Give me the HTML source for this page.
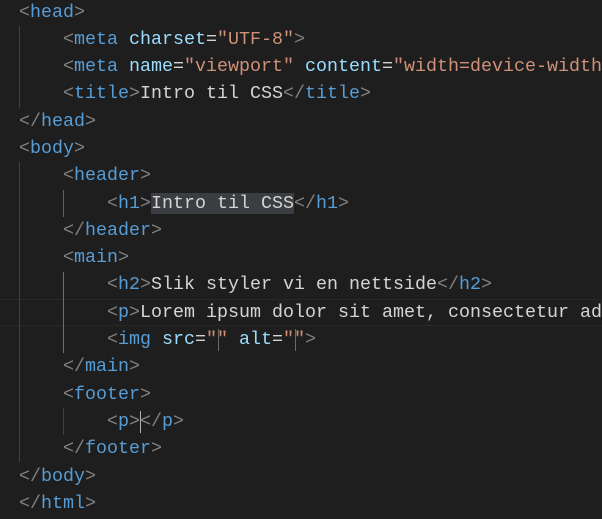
<!DOCTYPE html>
<html><head><meta charset="utf-8"><style>
body{margin:0;background:#1e1e1e;width:602px;height:518px;overflow:hidden;position:relative}
.c{position:absolute;left:19px;top:-1.5px;width:583px;height:520px;overflow:hidden;font-family:"Liberation Mono",monospace;font-size:18.33px;line-height:27.3px;color:#d4d4d4;white-space:pre}
.b{color:#808080}.t{color:#569cd6}.a{color:#9cdcfe}.s{color:#ce9178}
.g{position:absolute;width:1px;background:#404040}
.hl{position:absolute;left:0;width:602px;top:298.8px;height:25px;border-top:1px solid #282828;border-bottom:1px solid #282828}
.sel{background:#3a3d41}
.bm{position:absolute;width:1px;height:22px;background:#6a6a6a}
</style></head><body>
<div class="hl"></div>
<div class="g" style="left:19px;top:25.8px;height:81.9px"></div>
<div class="g" style="left:19px;top:162.3px;height:300px"></div>
<div class="g" style="left:63px;top:189.6px;height:27.3px;background:#606060"></div>
<div class="g" style="left:63px;top:271.5px;height:81.9px;background:#707070"></div>
<div class="g" style="left:63px;top:408px;height:27.3px"></div>
<div class="bm" style="left:218px;top:329px"></div>
<div class="bm" style="left:295px;top:329px"></div>
<div class="bm" style="left:140px;top:411px;background:#aeafad"></div>
<div class="c"><span class="b">&lt;</span><span class="t">head</span><span class="b">&gt;</span>
    <span class="b">&lt;</span><span class="t">meta</span> <span class="a">charset</span>=<span class="s">"UTF-8"</span><span class="b">&gt;</span>
    <span class="b">&lt;</span><span class="t">meta</span> <span class="a">name</span>=<span class="s">"viewport"</span> <span class="a">content</span>=<span class="s">"width=device-width, initial-scale=1.0"</span><span class="b">&gt;</span>
    <span class="b">&lt;</span><span class="t">title</span><span class="b">&gt;</span>Intro til CSS<span class="b">&lt;/</span><span class="t">title</span><span class="b">&gt;</span>
<span class="b">&lt;/</span><span class="t">head</span><span class="b">&gt;</span>
<span class="b">&lt;</span><span class="t">body</span><span class="b">&gt;</span>
    <span class="b">&lt;</span><span class="t">header</span><span class="b">&gt;</span>
        <span class="b">&lt;</span><span class="t">h1</span><span class="b">&gt;</span><span class="sel">Intro til CSS</span><span class="b">&lt;/</span><span class="t">h1</span><span class="b">&gt;</span>
    <span class="b">&lt;/</span><span class="t">header</span><span class="b">&gt;</span>
    <span class="b">&lt;</span><span class="t">main</span><span class="b">&gt;</span>
        <span class="b">&lt;</span><span class="t">h2</span><span class="b">&gt;</span>Slik styler vi en nettside<span class="b">&lt;/</span><span class="t">h2</span><span class="b">&gt;</span>
        <span class="b">&lt;</span><span class="t">p</span><span class="b">&gt;</span>Lorem ipsum dolor sit amet, consectetur adipisicing elit.
        <span class="b">&lt;</span><span class="t">img</span> <span class="a">src</span>=<span class="s">""</span> <span class="a">alt</span>=<span class="s">""</span><span class="b">&gt;</span>
    <span class="b">&lt;/</span><span class="t">main</span><span class="b">&gt;</span>
    <span class="b">&lt;</span><span class="t">footer</span><span class="b">&gt;</span>
        <span class="b">&lt;</span><span class="t">p</span><span class="b">&gt;&lt;/</span><span class="t">p</span><span class="b">&gt;</span>
    <span class="b">&lt;/</span><span class="t">footer</span><span class="b">&gt;</span>
<span class="b">&lt;/</span><span class="t">body</span><span class="b">&gt;</span>
<span class="b">&lt;/</span><span class="t">html</span><span class="b">&gt;</span></div>
</body></html>
